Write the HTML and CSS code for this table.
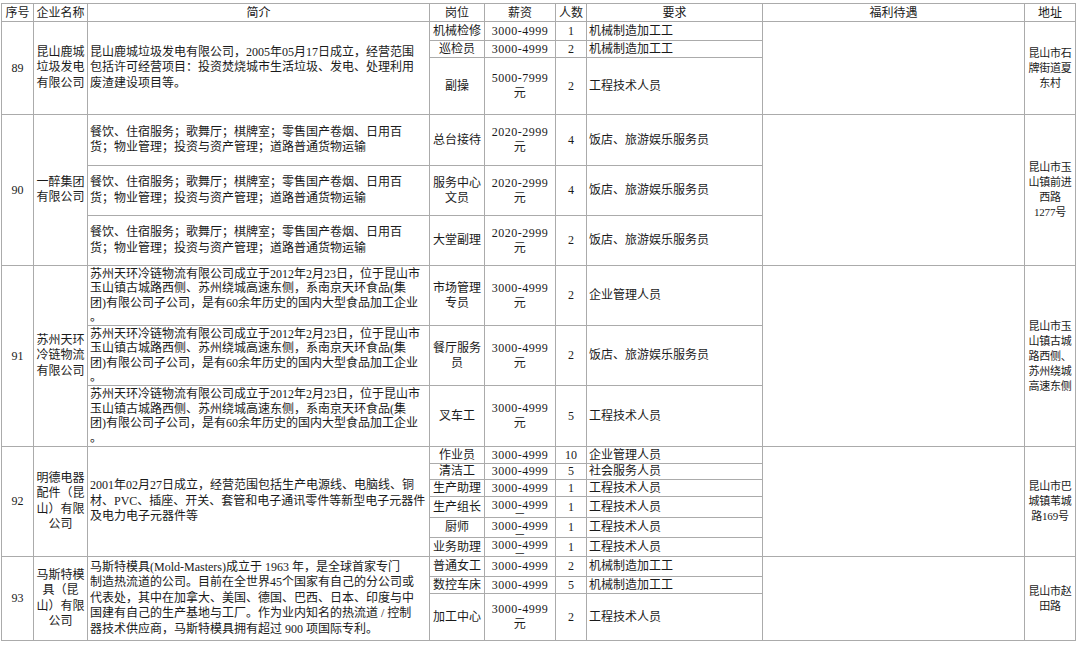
FILE: index.html
```html
<!DOCTYPE html>
<html lang="zh-CN">
<head>
<meta charset="utf-8">
<title>企业招聘信息</title>
<link rel="stylesheet" href="styles.css">
</head>
<body>
<table class="jobs">
  <colgroup>
    <col class="c-no"><col class="c-name"><col class="c-desc"><col class="c-pos"><col class="c-pay"><col class="c-num"><col class="c-req"><col class="c-fuli"><col class="c-addr">
  </colgroup>
  <tr class="r18 head">
    <td>序号</td><td>企业名称</td><td>简介</td><td>岗位</td><td>薪资</td><td>人数</td><td>要求</td><td>福利待遇</td><td>地址</td>
  </tr>

  <tr class="r19">
    <td rowspan="3" class="ctr">89</td>
    <td rowspan="3" class="name">昆山鹿城<br>垃圾发电<br>有限公司</td>
    <td rowspan="3" class="desc">昆山鹿城垃圾发电有限公司，2005年05月17日成立，经营范围<br>包括许可经营项目：投资焚烧城市生活垃圾、发电、处理利用<br>废渣建设项目等。</td>
    <td class="ctr">机械检修</td><td class="pay">3000-4999</td><td class="ctr">1</td><td class="req">机械制造加工工</td>
    <td rowspan="3"></td>
    <td rowspan="3" class="addr">昆山市石<br>牌街道夏<br>东村</td>
  </tr>
  <tr class="r17">
    <td class="ctr">巡检员</td><td class="pay">3000-4999</td><td class="ctr">2</td><td class="req">机械制造加工工</td>
  </tr>
  <tr class="r57">
    <td class="ctr">副操</td><td class="pay">5000-7999<br>元</td><td class="ctr">2</td><td class="req">工程技术人员</td>
  </tr>

  <tr class="r51">
    <td rowspan="3" class="ctr">90</td>
    <td rowspan="3" class="name">一醉集团<br>有限公司</td>
    <td class="desc">餐饮、住宿服务；歌舞厅；棋牌室；零售国产卷烟、日用百<br>货；物业管理；投资与资产管理；道路普通货物运输</td>
    <td class="ctr">总台接待</td><td class="pay">2020-2999<br>元</td><td class="ctr">4</td><td class="req">饭店、旅游娱乐服务员</td>
    <td rowspan="3"></td>
    <td rowspan="3" class="addr">昆山市玉<br>山镇前进<br>西路<br>1277号</td>
  </tr>
  <tr class="r50">
    <td class="desc">餐饮、住宿服务；歌舞厅；棋牌室；零售国产卷烟、日用百<br>货；物业管理；投资与资产管理；道路普通货物运输</td>
    <td class="ctr">服务中心<br>文员</td><td class="pay">2020-2999<br>元</td><td class="ctr">4</td><td class="req">饭店、旅游娱乐服务员</td>
  </tr>
  <tr class="r50">
    <td class="desc">餐饮、住宿服务；歌舞厅；棋牌室；零售国产卷烟、日用百<br>货；物业管理；投资与资产管理；道路普通货物运输</td>
    <td class="ctr">大堂副理</td><td class="pay">2020-2999<br>元</td><td class="ctr">2</td><td class="req">饭店、旅游娱乐服务员</td>
  </tr>

  <tr class="r60">
    <td rowspan="3" class="ctr">91</td>
    <td rowspan="3" class="name">苏州天环<br>冷链物流<br>有限公司</td>
    <td class="desc tight">苏州天环冷链物流有限公司成立于2012年2月23日，位于昆山市<br>玉山镇古城路西侧、苏州绕城高速东侧，系南京天环食品(集<br>团)有限公司子公司，是有60余年历史的国内大型食品加工企业<br>。</td>
    <td class="ctr">市场管理<br>专员</td><td class="pay">3000-4999<br>元</td><td class="ctr">2</td><td class="req">企业管理人员</td>
    <td rowspan="3"></td>
    <td rowspan="3" class="addr">昆山市玉<br>山镇古城<br>路西侧、<br>苏州绕城<br>高速东侧</td>
  </tr>
  <tr class="r60">
    <td class="desc tight">苏州天环冷链物流有限公司成立于2012年2月23日，位于昆山市<br>玉山镇古城路西侧、苏州绕城高速东侧，系南京天环食品(集<br>团)有限公司子公司，是有60余年历史的国内大型食品加工企业<br>。</td>
    <td class="ctr">餐厅服务<br>员</td><td class="pay">3000-4999<br>元</td><td class="ctr">2</td><td class="req">饭店、旅游娱乐服务员</td>
  </tr>
  <tr class="r61">
    <td class="desc tight">苏州天环冷链物流有限公司成立于2012年2月23日，位于昆山市<br>玉山镇古城路西侧、苏州绕城高速东侧，系南京天环食品(集<br>团)有限公司子公司，是有60余年历史的国内大型食品加工企业<br>。</td>
    <td class="ctr">叉车工</td><td class="pay">3000-4999<br>元</td><td class="ctr">5</td><td class="req">工程技术人员</td>
  </tr>

  <tr class="r17">
    <td rowspan="6" class="ctr">92</td>
    <td rowspan="6" class="name">明德电器<br>配件（昆<br>山）有限<br>公司</td>
    <td rowspan="6" class="desc down">2001年02月27日成立，经营范围包括生产电源线、电脑线、铜<br>材、PVC、插座、开关、套管和电子通讯零件等新型电子元器件<br>及电力电子元器件等</td>
    <td class="ctr">作业员</td><td class="pay">3000-4999</td><td class="ctr">10</td><td class="req">企业管理人员</td>
    <td rowspan="6"></td>
    <td rowspan="6" class="addr">昆山市巴<br>城镇苇城<br>路169号</td>
  </tr>
  <tr class="r16">
    <td class="ctr">清洁工</td><td class="pay">3000-4999</td><td class="ctr">5</td><td class="req">社会服务人员</td>
  </tr>
  <tr class="r17">
    <td class="ctr">生产助理</td><td class="pay">3000-4999</td><td class="ctr">1</td><td class="req">工程技术人员</td>
  </tr>
  <tr class="r21">
    <td class="ctr">生产组长</td><td class="pay pay-top"><div class="clip">3000-4999<br>元</div></td><td class="ctr">1</td><td class="req">工程技术人员</td>
  </tr>
  <tr class="r20">
    <td class="ctr">厨师</td><td class="pay pay-top"><div class="clip">3000-4999<br>元</div></td><td class="ctr">1</td><td class="req">工程技术人员</td>
  </tr>
  <tr class="r19">
    <td class="ctr">业务助理</td><td class="pay pay-top"><div class="clip">3000-4999<br>元</div></td><td class="ctr">1</td><td class="req">工程技术人员</td>
  </tr>

  <tr class="r20">
    <td rowspan="3" class="ctr">93</td>
    <td rowspan="3" class="name">马斯特模<br>具（昆<br>山）有限<br>公司</td>
    <td rowspan="3" class="desc">马斯特模具(Mold-Masters)成立于 1963 年，是全球首家专门<br>制造热流道的公司。目前在全世界45个国家有自己的分公司或<br>代表处，其中在加拿大、美国、德国、巴西、日本、印度与中<br>国建有自己的生产基地与工厂。作为业内知名的热流道 / 控制<br>器技术供应商，马斯特模具拥有超过 900 项国际专利。</td>
    <td class="ctr">普通女工</td><td class="pay">3000-4999</td><td class="ctr">2</td><td class="req">机械制造加工工</td>
    <td rowspan="3"></td>
    <td rowspan="3" class="addr">昆山市赵<br>田路</td>
  </tr>
  <tr class="r17">
    <td class="ctr">数控车床</td><td class="pay">3000-4999</td><td class="ctr">5</td><td class="req">机械制造加工工</td>
  </tr>
  <tr class="r47">
    <td class="ctr">加工中心</td><td class="pay">3000-4999<br>元</td><td class="ctr">2</td><td class="req">工程技术人员</td>
  </tr>
</table>
</body>
</html>
```

FILE: styles.css
```css
html, body {
  margin: 0;
  padding: 0;
  background: #ffffff;
}
body {
  padding: 3px 0 0 1px;
  font-family: "Liberation Serif", "Noto Sans CJK SC", serif;
  font-size: 12px;
  line-height: 15px;
  color: #1a1a1a;
}
.jobs {
  border-collapse: collapse;
  table-layout: fixed;
  width: 1074px;
}
.c-no { width: 32px; }
.c-name { width: 54px; }
.c-desc { width: 342px; }
.c-pos { width: 55px; }
.c-pay { width: 71px; }
.c-num { width: 31px; }
.c-req { width: 176px; }
.c-fuli { width: 262px; }
.c-addr { width: 51px; }

.jobs td {
  border: 1px solid #ababab;
  padding: 0 2px;
  vertical-align: middle;
  white-space: nowrap;
  overflow: hidden;
}
.head td {
  text-align: center;
  line-height: 14px;
}
.ctr { text-align: center; }
.pay {
  text-align: center;
  letter-spacing: 0.5px;
}
.name {
  text-align: center;
  line-height: 15.5px;
  padding: 0 1px;
}
.desc {
  text-align: left;
  padding-left: 3px;
  line-height: 15.5px;
}
.desc.tight { line-height: 14.5px; }
.down { padding-top: 8px; }
.req { text-align: left; }
.addr {
  text-align: center;
  font-size: 11px;
  line-height: 15px;
  padding: 0 1px;
  letter-spacing: -0.2px;
}
.pay-top { vertical-align: top; }
.clip {
  height: 18px;
  overflow: hidden;
  line-height: 14px;
}

.r16 { height: 16px; }
.r17 { height: 17px; }
.r18 { height: 18px; }
.r19 { height: 19px; }
.r20 { height: 20px; }
.r21 { height: 21px; }
.r47 { height: 47px; }
.r50 { height: 50px; }
.r51 { height: 51px; }
.r57 { height: 57px; }
.r60 { height: 60px; }
.r61 { height: 61px; }
```
